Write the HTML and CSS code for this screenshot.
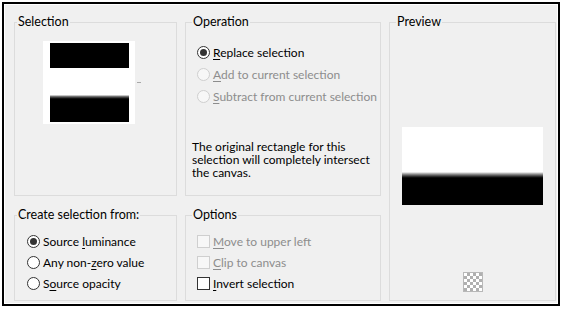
FILE: index.html
```html
<!DOCTYPE html>
<html lang="en">
<head>
  <meta charset="UTF-8" />
  <title>Selection from Mask</title>
  <link rel="stylesheet" href="styles.css">
</head>
<body>
  <div class="frame">
    <div class="dialog">

      <!-- Selection thumbnail -->
      <fieldset class="box selection">
        <legend>Selection</legend>
        <div class="thumb-row">
          <div class="thumb">
            <div class="band black"></div>
            <div class="band white"></div>
            <div class="band black fade"></div>
          </div>
          <span class="tick"></span>
        </div>
      </fieldset>

      <!-- Operation -->
      <fieldset class="box operation">
        <legend class="shift">Operation</legend>
        <div class="opts">
          <label class="opt"><span class="radio on"></span><span><u>R</u>eplace selection</span></label>
          <label class="opt off"><span class="radio"></span><span><u>A</u>dd to current selection</span></label>
          <label class="opt off"><span class="radio"></span><span><u>S</u>ubtract from current selection</span></label>
        </div>
        <p class="note">The original rectangle for this<br>selection will completely intersect<br>the canvas.</p>
      </fieldset>

      <!-- Preview -->
      <fieldset class="box preview">
        <legend class="shift">Preview</legend>
        <div class="preview-img">
          <div class="pwhite"></div>
          <div class="pblack"></div>
        </div>
        <div class="checker"></div>
      </fieldset>

      <!-- Create selection from -->
      <fieldset class="box create">
        <legend>Create selection from:</legend>
        <div class="opts tight">
          <label class="opt"><span class="radio on"></span><span>Source <u>l</u>uminance</span></label>
          <label class="opt"><span class="radio"></span><span>Any non-<u>z</u>ero value</span></label>
          <label class="opt"><span class="radio"></span><span>S<u>o</u>urce opacity</span></label>
        </div>
      </fieldset>

      <!-- Options -->
      <fieldset class="box options">
        <legend class="shift">Options</legend>
        <div class="opts tight">
          <label class="opt off"><span class="check"></span><span><u>M</u>ove to upper left</span></label>
          <label class="opt off"><span class="check"></span><span><u>C</u>lip to canvas</span></label>
          <label class="opt"><span class="check"></span><span><u>I</u>nvert selection</span></label>
        </div>
      </fieldset>

    </div>
  </div>
</body>
</html>
```

FILE: styles.css
```css
body {
  margin: 0;
  background: #fff;
  font-family: Lato, "Liberation Sans", sans-serif;
  font-size: 12px;
  color: #000;
}
.frame {
  margin: 2px 0 0 2px;
  width: 558px;
  height: 304px;
  box-sizing: border-box;
  border: 2px solid #000;
  padding: 1px;
  background: #fff;
}
.dialog {
  height: 100%;
  box-sizing: border-box;
  background: #f0f0f0;
  padding: 9px 0 0 9px;
  display: grid;
  grid-template-columns: 163px 196px 167px;
  grid-template-rows: 182px 94px;
  column-gap: 8px;
  row-gap: 11px;
}
.box {
  margin: 0;
  padding: 0;
  min-width: 0;
  border: 1px solid #dcdcdc;
}
.box legend {
  padding: 0 1px;
  margin-left: 2px;
  line-height: 16px;
  font-size: 12.5px;
  white-space: nowrap;
}
.box legend.shift {
  margin-left: 6px;
}
.preview {
  grid-row: 1 / span 2;
  grid-column: 3;
}

/* selection thumbnail */
.thumb-row {
  display: flex;
  align-items: center;
  padding: 11px 0 0 28px;
}
.thumb {
  width: 92px;
  height: 83px;
  box-sizing: border-box;
  background: #fff;
  padding: 2px 6px 2px 7px;
}
.band {
  height: 27px;
}
.band:first-child {
  height: 25px;
}
.black {
  background: #000;
}
.white {
  background: #fff;
}
.fade {
  background: linear-gradient(#fff 0, #8a8a8a 1px, #222 3px, #000 4px);
}
.tick {
  width: 4px;
  height: 1px;
  margin-left: 2px;
  background: #a8a8a8;
}

/* radio / checkbox rows */
.opts {
  padding: 11px 0 0 11px;
}
.opts.tight {
  padding: 8px 0 0 12px;
}
.options .opts.tight {
  padding-left: 11px;
}
.opt {
  display: flex;
  align-items: center;
  gap: 3px;
  height: 22px;
  white-space: nowrap;
}
.tight .opt {
  height: 21px;
}
.opt u {
  text-decoration-thickness: 1px;
  text-underline-offset: 2px;
}
.opt.off {
  color: #8d8d8d;
}
.radio,
.check {
  width: 13px;
  height: 13px;
  flex: none;
  box-sizing: border-box;
  border: 1px solid #333;
  background: #fff;
  position: relative;
}
.radio {
  border-radius: 50%;
}
.radio.on::after {
  content: "";
  position: absolute;
  inset: 2px;
  border-radius: 50%;
  background: #333;
}
.off .radio,
.off .check {
  border-color: #cfcfcf;
  background: #f7f7f7;
}
.note {
  margin: 33px 0 0 6px;
  line-height: 13px;
  white-space: nowrap;
}

/* preview */
.preview-img {
  width: 141px;
  height: 78px;
  margin: 97px auto 0;
}
.pwhite {
  height: 45px;
  background: #fff;
}
.pblack {
  height: 33px;
  background: linear-gradient(#fff 0, #c8c8c8 1px, #6a6a6a 3px, #1a1a1a 5px, #000 6px);
}
.checker {
  width: 20px;
  height: 20px;
  box-sizing: border-box;
  margin: 67px auto 0;
  border: 1px solid #b8b8b8;
  background-color: #fff;
  background-image: conic-gradient(#b0b0b0 25%, #fff 0 50%, #b0b0b0 0 75%, #fff 0);
  background-size: 6px 6px;
  background-position: 0 0;
}
```
